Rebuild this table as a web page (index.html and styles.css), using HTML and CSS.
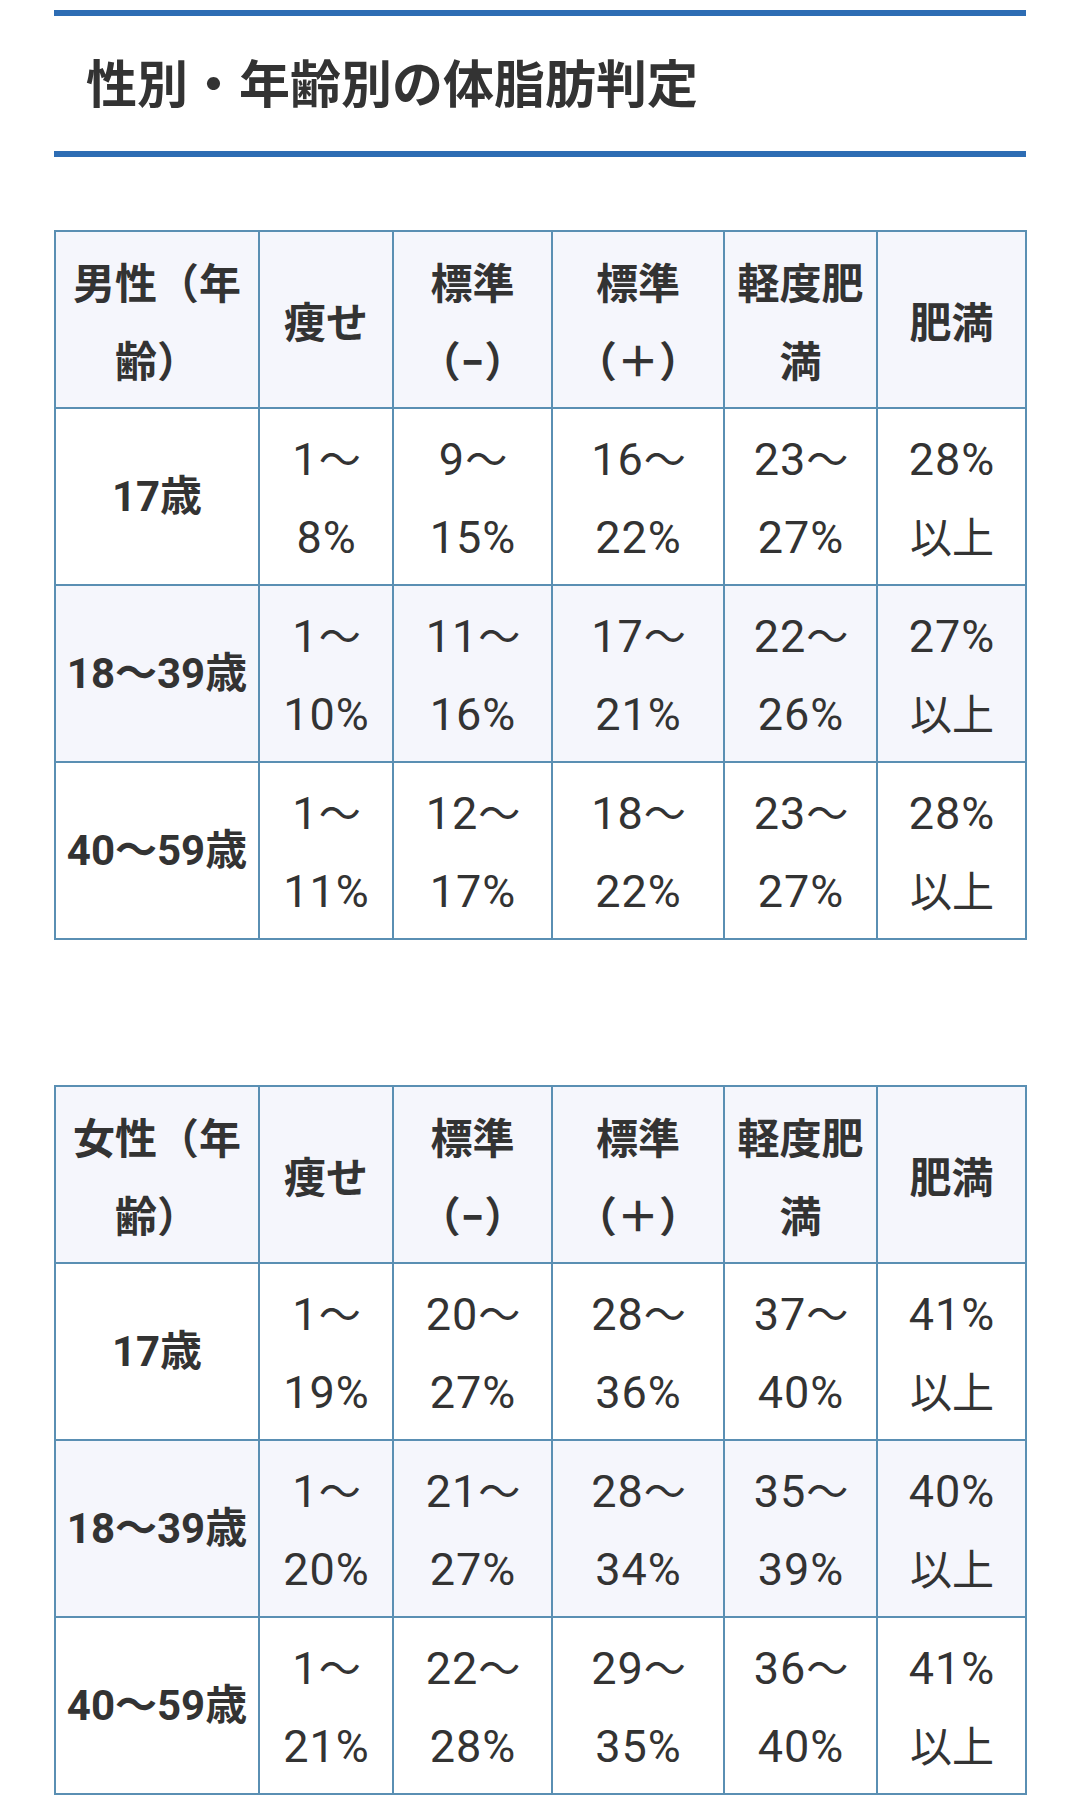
FILE: index.html
```html
<!DOCTYPE html>
<html lang="ja">
<head>
<meta charset="utf-8">
<title>性別・年齢別の体脂肪判定</title>
<link rel="stylesheet" href="styles.css">
</head>
<body>
<div class="page">
  <h2 class="title">性別・年齢別の体脂肪判定</h2>

  <table class="fat-table first">
    <colgroup>
      <col class="c-age"><col class="c-thin"><col class="c-std-minus"><col class="c-std-plus"><col class="c-light"><col class="c-obese">
    </colgroup>
    <thead>
      <tr>
        <th>男性（年<br>齢）</th>
        <th>痩せ</th>
        <th>標準<br>（−）</th>
        <th>標準<br>（＋）</th>
        <th>軽度肥<br>満</th>
        <th>肥満</th>
      </tr>
    </thead>
    <tbody>
      <tr>
        <th class="age">17歳</th>
        <td>1<span class="jp">～</span><br>8%</td><td>9<span class="jp">～</span><br>15%</td><td>16<span class="jp">～</span><br>22%</td><td>23<span class="jp">～</span><br>27%</td><td>28%<br><span class="jp">以上</span></td>
      </tr>
      <tr class="alt">
        <th class="age">18～39歳</th>
        <td>1<span class="jp">～</span><br>10%</td><td>11<span class="jp">～</span><br>16%</td><td>17<span class="jp">～</span><br>21%</td><td>22<span class="jp">～</span><br>26%</td><td>27%<br><span class="jp">以上</span></td>
      </tr>
      <tr>
        <th class="age">40～59歳</th>
        <td>1<span class="jp">～</span><br>11%</td><td>12<span class="jp">～</span><br>17%</td><td>18<span class="jp">～</span><br>22%</td><td>23<span class="jp">～</span><br>27%</td><td>28%<br><span class="jp">以上</span></td>
      </tr>
    </tbody>
  </table>

  <table class="fat-table second">
    <colgroup>
      <col class="c-age"><col class="c-thin"><col class="c-std-minus"><col class="c-std-plus"><col class="c-light"><col class="c-obese">
    </colgroup>
    <thead>
      <tr>
        <th>女性（年<br>齢）</th>
        <th>痩せ</th>
        <th>標準<br>（−）</th>
        <th>標準<br>（＋）</th>
        <th>軽度肥<br>満</th>
        <th>肥満</th>
      </tr>
    </thead>
    <tbody>
      <tr>
        <th class="age">17歳</th>
        <td>1<span class="jp">～</span><br>19%</td><td>20<span class="jp">～</span><br>27%</td><td>28<span class="jp">～</span><br>36%</td><td>37<span class="jp">～</span><br>40%</td><td>41%<br><span class="jp">以上</span></td>
      </tr>
      <tr class="alt">
        <th class="age">18～39歳</th>
        <td>1<span class="jp">～</span><br>20%</td><td>21<span class="jp">～</span><br>27%</td><td>28<span class="jp">～</span><br>34%</td><td>35<span class="jp">～</span><br>39%</td><td>40%<br><span class="jp">以上</span></td>
      </tr>
      <tr>
        <th class="age">40～59歳</th>
        <td>1<span class="jp">～</span><br>21%</td><td>22<span class="jp">～</span><br>28%</td><td>29<span class="jp">～</span><br>35%</td><td>36<span class="jp">～</span><br>40%</td><td>41%<br><span class="jp">以上</span></td>
      </tr>
    </tbody>
  </table>
</div>
</body>
</html>
```

FILE: styles.css
```css
html, body {
  margin: 0;
  padding: 0;
  background: #ffffff;
}

.page {
  padding: 0 54px 20px 54px;
  color: #333333;
  font-family: Roboto, "Noto Sans CJK JP", sans-serif;
}

.title {
  margin: 10px 0 0 0;
  border-top: 6px solid #2d6db4;
  border-bottom: 6px solid #2d6db4;
  padding: 28px 30px 32px 32px;
  font-family: "Noto Sans CJK JP", sans-serif;
  font-size: 51px;
  line-height: 75px;
  font-weight: 700;
  color: #333333;
  letter-spacing: 0;
}

.fat-table {
  width: 971px;
  table-layout: fixed;
  border-collapse: collapse;
  font-size: 42px;
  line-height: 78px;
  color: #333333;
}

.fat-table.first {
  margin-top: 73px;
}

.fat-table.second {
  margin-top: 145px;
}

.c-age { width: 204px; }
.c-thin { width: 134px; }
.c-std-minus { width: 159px; }
.c-std-plus { width: 172px; }
.c-light { width: 153px; }
.c-obese { width: 149px; }

.fat-table th,
.fat-table td {
  border: 2px solid #5a8fb3;
  text-align: center;
  vertical-align: middle;
  padding: 10px 0 9px 0;
}

.fat-table thead th {
  background: #f5f6fc;
  font-weight: 700;
  padding: 14px 0 5px 0;
}

.fat-table th.age {
  font-weight: 700;
  white-space: nowrap;
}

.fat-table td {
  font-weight: 400;
  font-size: 45px;
  letter-spacing: 1px;
  padding: 12px 0 7px 1px;
}

.fat-table td .jp {
  font-size: 42px;
  line-height: 1;
  letter-spacing: 0;
}

.fat-table tr.alt th,
.fat-table tr.alt td {
  background: #f5f6fc;
}
```
